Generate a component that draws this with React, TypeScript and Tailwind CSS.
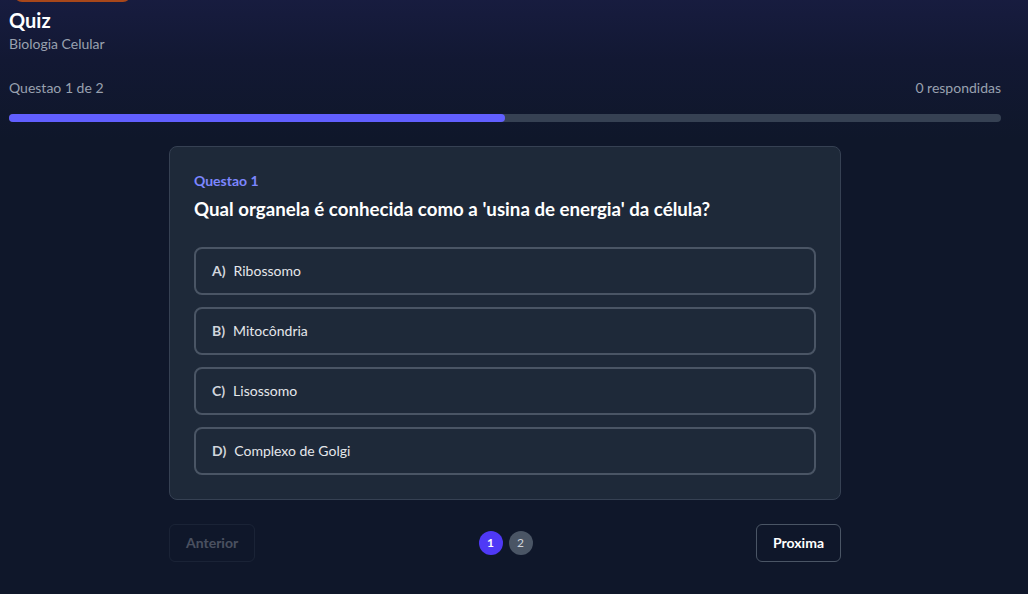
import React, { useState } from 'react';

const options = [
  { key: 'A', label: 'Ribossomo' },
  { key: 'B', label: 'Mitocôndria' },
  { key: 'C', label: 'Lisossomo' },
  { key: 'D', label: 'Complexo de Golgi' },
];

export default function App() {
  const [current] = useState(0);
  const total = 2;

  return (
    <div className="min-h-[594px] bg-[linear-gradient(to_bottom,#1a1e45_0px,#121833_90px,#0f172a_170px,#0f172a_100%)] pl-[9px] pr-[27px] pb-8 font-['Lato',sans-serif] text-white">
      {/* Header */}
      <div className="-mt-[30px] ml-[5px] h-[32px] w-[117px] rounded-lg border-2 border-[#a8471a] bg-[#1a1e45]" />
      <h1 className="mt-[4px] text-[20px] font-bold leading-7 text-white">Quiz</h1>
      <p className="text-sm leading-5 text-gray-400">Biologia Celular</p>

      {/* Progress */}
      <div className="mt-[24px] flex items-center justify-between text-sm leading-5 text-gray-400">
        <span>Questao {current + 1} de {total}</span>
        <span>0 respondidas</span>
      </div>
      <div className="mt-[16px] h-2 w-full rounded-full bg-gray-700">
        <div className="h-2 rounded-full bg-indigo-500" style={{ width: `${((current + 1) / total) * 100}%` }} />
      </div>

      {/* Question card */}
      <div className="mx-auto mt-6 max-w-2xl">
        <div className="rounded-lg border border-gray-700 bg-gray-800 p-6">
          <p className="text-sm font-bold leading-5 text-indigo-400">Questao 1</p>
          <h2 className="mt-[4px] text-[18.7px] font-bold leading-7 text-white">
            Qual organela é conhecida como a 'usina de energia' da célula?
          </h2>
          <div className="mt-[24px] flex flex-col gap-3">
            {options.map((o) => (
              <button
                key={o.key}
                className="flex items-center rounded-lg border-2 border-gray-600 bg-gray-800 px-4 py-3 text-left text-sm leading-5"
              >
                <span className="mr-2 font-bold text-gray-300">{o.key})</span>
                <span className="text-gray-200">{o.label}</span>
              </button>
            ))}
          </div>
        </div>

        {/* Navigation */}
        <div className="mt-6 flex items-center justify-between">
          <button disabled className="rounded-md border border-gray-700 px-4 py-2 text-sm font-bold leading-5 text-gray-300 opacity-30">
            Anterior
          </button>
          <div className="flex items-center gap-1.5">
            <span className="flex h-6 w-6 items-center justify-center rounded-full bg-indigo-600 text-xs font-bold text-white">1</span>
            <span className="flex h-6 w-6 items-center justify-center rounded-full bg-gray-600 text-xs text-gray-300">2</span>
          </div>
          <button className="rounded-md border border-gray-600 px-4 py-2 text-sm font-bold leading-5 text-white">
            Proxima
          </button>
        </div>
      </div>
    </div>
  );
}
